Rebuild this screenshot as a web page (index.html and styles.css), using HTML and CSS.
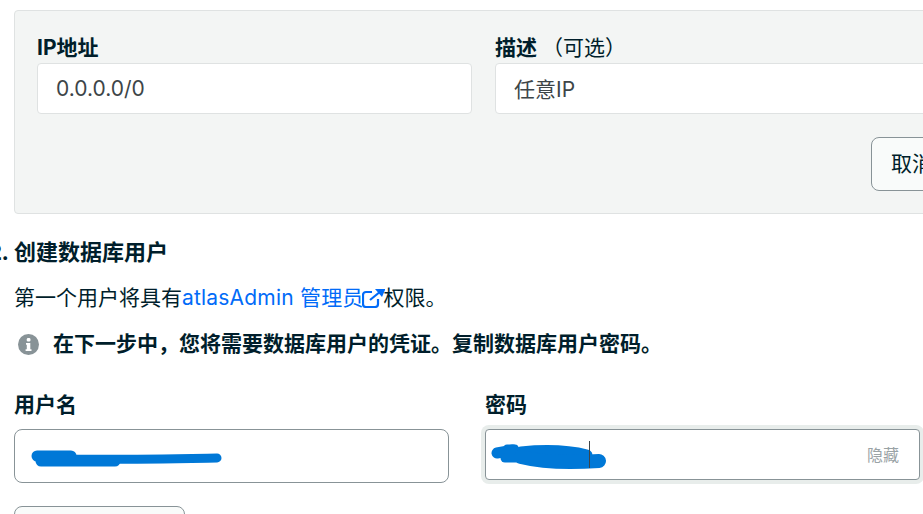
FILE: index.html
```html
<!DOCTYPE html>
<html lang="zh-CN">
<head>
<meta charset="utf-8">
<title>创建数据库用户</title>
<link rel="stylesheet" href="styles.css">
</head>
<body>
<main class="page">
  <section class="ip-box">
    <div class="ip-grid">
      <div class="field">
        <label class="label">IP地址</label>
        <div class="input input-soft input-latin">0.0.0.0/0</div>
      </div>
      <div class="field">
        <label class="label">描述 <span class="optional">（可选）</span></label>
        <div class="input input-soft input-cjk">任意IP</div>
      </div>
    </div>
    <div class="actions">
      <button class="btn">取消</button>
    </div>
  </section>

  <ol class="steps" start="2">
    <li class="step">
      <h2 class="step-title">创建数据库用户</h2>
      <p class="intro">第一个用户将具有<a class="link" href="#">atlasAdmin 管理员<svg class="ext-icon" width="23" height="19" viewBox="0 0 23 19" fill="none" stroke="#016bf8" stroke-width="2.2"><path d="M10 3H4a3 3 0 0 0-3 3v9a3 3 0 0 0 3 3h9a3 3 0 0 0 3-3v-5"/><path d="M8 11 19 2"/><path d="M13 0h10v1l-3 7z" fill="#016bf8" stroke="none"/></svg></a>权限。</p>
      <p class="notice">
        <svg class="info-icon" width="21" height="21" viewBox="0 0 21 21"><circle cx="10.5" cy="10.5" r="10.5" fill="#889397"/><rect x="8.8" y="4" width="3.6" height="3.4" rx="1.2" fill="#fff"/><path d="M8 9h4.3v6.2h1.2V17H7.6v-1.8h1.2V10.7H8z" fill="#fff"/></svg>
        <span>在下一步中，您将需要数据库用户的凭证。复制数据库用户密码。</span>
      </p>
      <div class="cred-grid">
        <div class="field">
          <label class="label">用户名</label>
          <div class="input input-strong">
            <svg class="scribble scribble-user" width="192" height="22" viewBox="0 0 192 22" fill="none" stroke="#0078d7" stroke-linecap="round" stroke-linejoin="round"><path d="M6 9h34" stroke-width="11"/><path d="M10 14h74" stroke-width="11"/><path d="M40 12c40 1 90 0 146-1" stroke-width="9"/></svg>
          </div>
        </div>
        <div class="field">
          <label class="label">密码</label>
          <div class="input input-focus">
            <svg class="scribble scribble-pass" width="120" height="28" viewBox="0 0 120 28" fill="none" stroke="#0078d7" stroke-linecap="round" stroke-linejoin="round"><path d="M6 11 22 8" stroke-width="11"/><path d="M16 6l8 0" stroke-width="7"/><path d="M14 16h22" stroke-width="9"/><path d="M30 10c20-2 46-2 66 3" stroke-width="11"/><path d="M30 15c20 5 50 6 78 4" stroke-width="14"/></svg>
            <span class="caret"></span>
            <span class="hide-toggle">隐藏</span>
          </div>
        </div>
      </div>
      <button class="btn btn-wide" aria-label="生成密码"></button>
    </li>
  </ol>
</main>
</body>
</html>
```
FILE: styles.css
```css
html, body {
  margin: 0;
  height: 514px;
  overflow: hidden;
  background: #fff;
}

body {
  font-family: Inter, "Noto Sans CJK SC", sans-serif;
  font-size: 21px;
  line-height: 24px;
  color: #001e2b;
}

.page {
  width: 976px;
  padding: 10px 0 0 14px;
  box-sizing: border-box;
}

.ip-box {
  background: #f3f5f4;
  border: 1px solid #dfe2e2;
  border-radius: 4px;
  padding: 25px 22px 22px;
}

.ip-grid {
  display: grid;
  grid-template-columns: 435px 1fr;
  column-gap: 23px;
}

.field {
  display: flex;
  flex-direction: column;
  min-width: 0;
}

.label {
  font-weight: 700;
  line-height: 24px;
}

.optional {
  font-weight: 400;
}

.input {
  position: relative;
  box-sizing: border-box;
  background: #fff;
  border-radius: 4px;
  display: flex;
  align-items: center;
}

.input-soft {
  height: 51px;
  margin-top: 3px;
  padding: 0 18px;
  border: 1px solid #dfe2e2;
  color: #3d4548;
}

.input-cjk {
  padding-top: 2px;
}

.input-strong {
  height: 54px;
  margin-top: 12px;
  border: 1px solid #889397;
  border-radius: 8px;
}

.input-focus {
  height: 51px;
  margin-top: 12px;
  border: 1px solid #889397;
  box-shadow: 0 0 0 4px #e8edeb;
}

.actions {
  display: flex;
  justify-content: flex-end;
  margin-top: 23px;
}

.btn {
  height: 54px;
  padding: 0 19px;
  font: inherit;
  color: #001e2b;
  background: #f9fbfa;
  border: 1px solid #889397;
  border-radius: 8px;
}

.steps {
  margin: 26px 0 0;
  padding: 0;
  list-style: decimal outside;
}

.step::marker {
  font-weight: 700;
  font-size: 22px;
}

.step-title {
  margin: 0;
  font-size: 22px;
  line-height: 24px;
  font-weight: 700;
}

.intro {
  margin: 22px 0 0;
}

.link {
  color: #016bf8;
  text-decoration: none;
  letter-spacing: 0.2px;
}

.ext-icon {
  vertical-align: -3px;
  margin: 0 -1px 0 -2px;
}

.notice {
  display: flex;
  align-items: center;
  gap: 14px;
  margin: 22px 0 0;
  padding-left: 4px;
  font-weight: 700;
}

.info-icon {
  flex: none;
}

.cred-grid {
  display: grid;
  grid-template-columns: 435px 435px;
  column-gap: 36px;
  align-items: start;
  margin-top: 37px;
}

.scribble {
  position: absolute;
}

.scribble-user {
  left: 16px;
  top: 17px;
}

.scribble-pass {
  left: 5px;
  top: 12px;
}

.caret {
  position: absolute;
  left: 103px;
  top: 11px;
  width: 1px;
  height: 27px;
  background: #3d4548;
}

.hide-toggle {
  margin-left: auto;
  padding-right: 20px;
  font-size: 16px;
  color: #9aa3a6;
}

.btn-wide {
  display: block;
  width: 171px;
  margin-top: 23px;
}
```
